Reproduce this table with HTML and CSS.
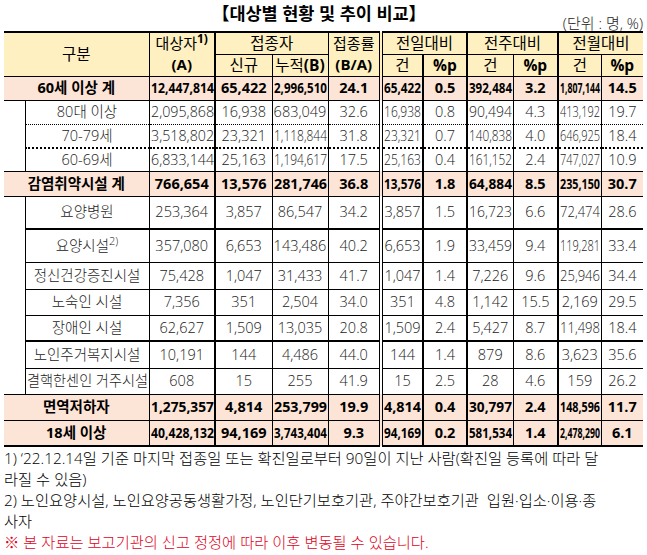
FILE: index.html
```html
<!DOCTYPE html>
<html lang="ko">
<head>
<meta charset="utf-8">
<title>대상별 현황 및 추이 비교</title>
<link rel="stylesheet" href="styles.css">
</head>
<body>
<div class="page">
  <div class="caption">
    <div class="title">【대상별 현황 및 추이 비교】</div>
    <div class="unit">(단위 : 명, %)</div>
  </div>
  <table class="stats">
    <colgroup>
      <col class="c-ind"><col class="c-lab"><col class="c-tgt"><col class="c-new"><col class="c-cum"><col class="c-rate">
      <col class="c-d1"><col class="c-d2"><col class="c-w1"><col class="c-w2"><col class="c-m1"><col class="c-m2">
    </colgroup>
    <thead>
      <tr class="h22">
        <th colspan="2" rowspan="2">구분</th>
        <th rowspan="2" class="two">대상자<sup>1)</sup><br><b>(A)</b></th>
        <th colspan="2">접종자</th>
        <th rowspan="2" class="two">접종률<br><b>(B/A)</b></th>
        <th colspan="2">전일대비</th>
        <th colspan="2">전주대비</th>
        <th colspan="2">전월대비</th>
      </tr>
      <tr class="h22">
        <th>신규</th><th>누적<b>(B)</b></th>
        <th>건</th><th><b>%p</b></th>
        <th>건</th><th><b>%p</b></th>
        <th>건</th><th><b>%p</b></th>
      </tr>
    </thead>
    <tbody>
      <tr class="sum h24 bl1"><td colspan="2">60세 이상 계</td><td>12,447,814</td><td>65,422</td><td>2,996,510</td><td>24.1</td><td>65,422</td><td>0.5</td><td>392,484</td><td>3.2</td><td>1,807,144</td><td>14.5</td></tr>
      <tr class="h24 bd1"><td class="ind" rowspan="3"></td><td>80대 이상</td><td>2,095,868</td><td>16,938</td><td>683,049</td><td>32.6</td><td>16,938</td><td>0.8</td><td>90,494</td><td>4.3</td><td>413,192</td><td>19.7</td></tr>
      <tr class="h24 bd2"><td>70-79세</td><td>3,518,802</td><td>23,321</td><td>1,118,844</td><td>31.8</td><td>23,321</td><td>0.7</td><td>140,838</td><td>4.0</td><td>646,925</td><td>18.4</td></tr>
      <tr class="h23 bl1"><td>60-69세</td><td>6,833,144</td><td>25,163</td><td>1,194,617</td><td>17.5</td><td>25,163</td><td>0.4</td><td>161,152</td><td>2.4</td><td>747,027</td><td>10.9</td></tr>
      <tr class="sum h25 bl1"><td colspan="2">감염취약시설 계</td><td>766,654</td><td>13,576</td><td>281,746</td><td>36.8</td><td>13,576</td><td>1.8</td><td>64,884</td><td>8.5</td><td>235,150</td><td>30.7</td></tr>
      <tr class="h33 bl2"><td class="ind" rowspan="7"></td><td>요양병원</td><td>253,364</td><td>3,857</td><td>86,547</td><td>34.2</td><td>3,857</td><td>1.5</td><td>16,723</td><td>6.6</td><td>72,474</td><td>28.6</td></tr>
      <tr class="h33 bl1"><td>요양시설<sup>2)</sup></td><td>357,080</td><td>6,653</td><td>143,486</td><td>40.2</td><td>6,653</td><td>1.9</td><td>33,459</td><td>9.4</td><td>119,281</td><td>33.4</td></tr>
      <tr class="h27 bl1"><td>정신건강증진시설</td><td>75,428</td><td>1,047</td><td>31,433</td><td>41.7</td><td>1,047</td><td>1.4</td><td>7,226</td><td>9.6</td><td>25,946</td><td>34.4</td></tr>
      <tr class="h26 bl1"><td>노숙인 시설</td><td>7,356</td><td>351</td><td>2,504</td><td>34.0</td><td>351</td><td>4.8</td><td>1,142</td><td>15.5</td><td>2,169</td><td>29.5</td></tr>
      <tr class="h26 bl2"><td>장애인 시설</td><td>62,627</td><td>1,509</td><td>13,035</td><td>20.8</td><td>1,509</td><td>2.4</td><td>5,427</td><td>8.7</td><td>11,498</td><td>18.4</td></tr>
      <tr class="h27 bl1"><td>노인주거복지시설</td><td>10,191</td><td>144</td><td>4,486</td><td>44.0</td><td>144</td><td>1.4</td><td>879</td><td>8.6</td><td>3,623</td><td>35.6</td></tr>
      <tr class="h26 bl1"><td>결핵한센인 거주시설</td><td>608</td><td>15</td><td>255</td><td>41.9</td><td>15</td><td>2.5</td><td>28</td><td>4.6</td><td>159</td><td>26.2</td></tr>
      <tr class="sum h26 bl1"><td colspan="2">면역저하자</td><td>1,275,357</td><td>4,814</td><td>253,799</td><td>19.9</td><td>4,814</td><td>0.4</td><td>30,797</td><td>2.4</td><td>148,596</td><td>11.7</td></tr>
      <tr class="sum h26 bl2"><td colspan="2">18세 이상</td><td>40,428,132</td><td>94,169</td><td>3,743,404</td><td>9.3</td><td>94,169</td><td>0.2</td><td>581,534</td><td>1.4</td><td>2,478,290</td><td>6.1</td></tr>
    </tbody>
  </table>
  <div class="notes">
    <p>1) ‘22.12.14일 기준 마지막 접종일 또는 확진일로부터 90일이 지난 사람(확진일 등록에 따라 달<br>라질 수 있음)</p>
    <p>2) 노인요양시설, 노인요양공동생활가정, 노인단기보호기관, 주야간보호기관&nbsp; 입원·입소·이용·종<br>사자</p>
    <p class="warn">※ 본 자료는 보고기관의 신고 정정에 따라 이후 변동될 수 있습니다.</p>
  </div>
</div>
<script src="script.js"></script>
</body>
</html>
```

FILE: styles.css
```css
html, body {
  margin: 0;
  padding: 0;
  background: #ffffff;
}

body {
  font-family: "Open Sans", "Noto Sans CJK KR", sans-serif;
  color: #000;
}

.page {
  width: 647px;
  padding: 0 4px;
  box-sizing: border-box;
}

.caption {
  height: 31px;
}

.title {
  height: 15px;
  line-height: 26px;
  font-size: 17.5px;
  font-weight: bold;
  text-align: center;
  padding-right: 9px;
}

.unit {
  height: 16px;
  line-height: 16px;
  font-size: 15px;
  font-weight: 300;
  text-align: right;
  color: #222;
}

.stats {
  width: 639px;
  border-collapse: collapse;
  table-layout: fixed;
}

.c-ind { width: 21px; }
.c-lab { width: 124px; border-left: 1px solid #000; }
.c-tgt { width: 66px; border-left: 1px solid #000; border-right: 2px solid #000; }
.c-new { width: 57px; }
.c-cum { width: 56px; border-left: 1px solid #000; }
.c-rate { width: 53px; border-left: 1px solid #000; }
.c-d1 { width: 42px; border-left: 4px double #000; }
.c-d2 { width: 44px; border-left: 2px solid #000; }
.c-w1 { width: 46px; border-left: 2px solid #000; }
.c-w2 { width: 45px; border-left: 1px solid #000; }
.c-m1 { width: 43px; border-left: 2px solid #000; }
.c-m2 { width: 42px; border-left: 1px solid #000; }

.stats th,
.stats td {
  padding: 0 1px;
  white-space: nowrap;
  text-align: center;
  vertical-align: middle;
  overflow: visible;
}

.stats th {
  background: #fff0c1;
  font-weight: normal;
  font-size: 15.5px;
  line-height: 19px;
  color: #000;
  border-bottom: 1px solid #000;
}

.stats th.two {
  font-size: 15px;
  line-height: 21px;
}

.stats thead tr:first-child th {
  border-top: 2px solid #000;
}

.stats th b {
  font-weight: bold;
}

.stats th sup {
  font-size: 12px;
  font-weight: bold;
  line-height: 0;
  vertical-align: 6px;
}

.stats td {
  font-size: 14.5px;
  line-height: 18px;
  font-weight: 300;
  color: #222;
}

.stats td sup {
  font-size: 11px;
  line-height: 0;
  vertical-align: 6px;
}

.stats .sum td {
  background: #fce4d6;
  font-weight: bold;
  color: #000;
}

.h22 { height: 22px; }
.h23 { height: 23px; }
.h24 { height: 24px; }
.h25 { height: 25px; }
.h26 { height: 26px; }
.h27 { height: 27px; }
.h28 { height: 28px; }
.h33 { height: 33px; }
.h34 { height: 34px; }

.bl1 td { border-bottom: 1px solid #000; }
.bl2 td { border-bottom: 2px solid #000; }
.bd1 td { border-bottom: 1px dotted #000; }
.bd2 td { border-bottom: 2px dotted #000; }

.stats td.ind {
  background: #fff;
  border-bottom: 1px solid #000;
}

.fit {
  display: inline-block;
  transform-origin: left center;
}

.notes {
  margin-top: 1px;
  font-size: 15.3px;
  line-height: 21px;
  font-weight: 300;
  white-space: nowrap;
  color: #000;
}

.notes p {
  margin: 0;
}

.notes .warn {
  color: #e0001b;
}
```

FILE: script.js
```js
document.querySelectorAll('.stats tbody td').forEach(function (td) {
  if (!td.textContent.trim()) return;
  var span = document.createElement('span');
  span.className = 'fit';
  while (td.firstChild) span.appendChild(td.firstChild);
  td.appendChild(span);
  var cs = getComputedStyle(td);
  var avail = td.clientWidth - parseFloat(cs.paddingLeft) - parseFloat(cs.paddingRight);
  var w = span.getBoundingClientRect().width;
  if (w > avail) {
    span.style.transform = 'scaleX(' + (avail / w).toFixed(3) + ')';
    span.style.marginRight = (avail - w).toFixed(2) + 'px';
  }
});
```
